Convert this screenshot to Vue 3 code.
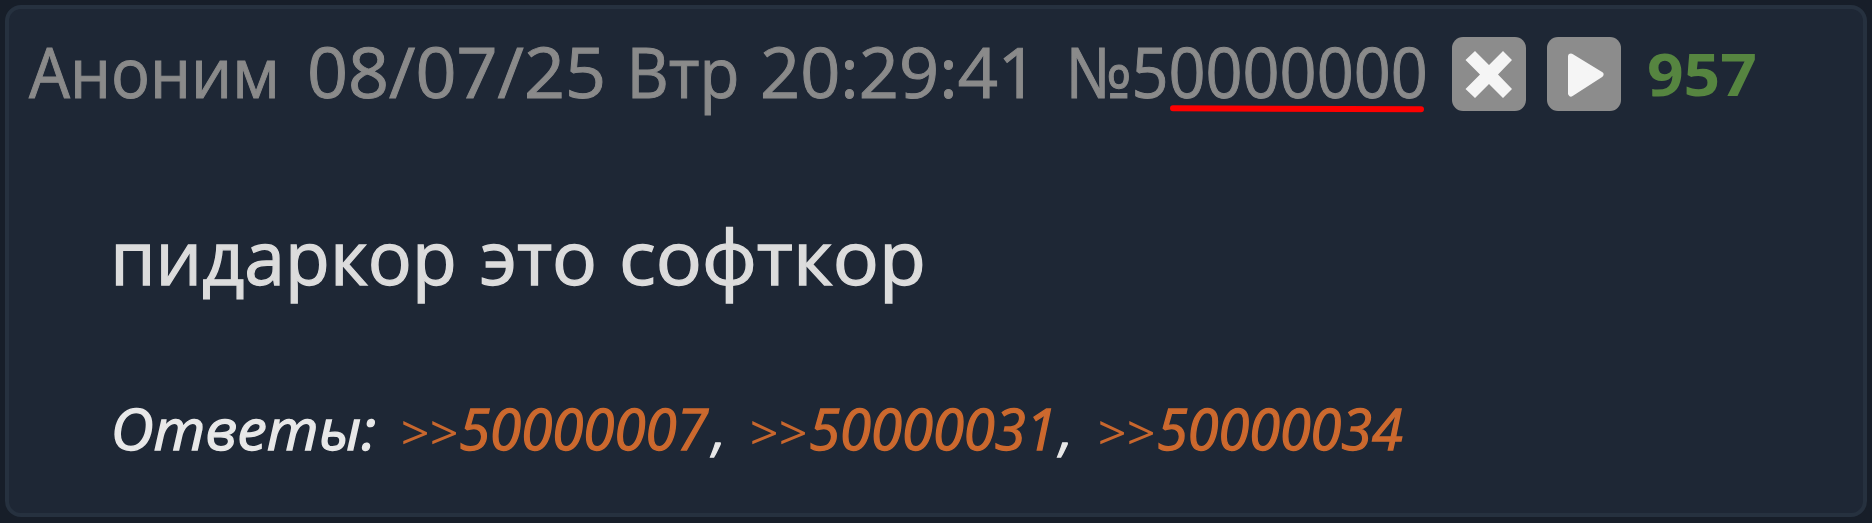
<script setup>
import { ref, onMounted } from 'vue'

// Each word carries its gap from the previous item and its drawn width.
const header = [
  { text: 'Аноним', gap: 0, width: 246 },
  { text: '08/07/25', gap: 35, width: 292 },
  { text: 'Втр', gap: 30, width: 104 },
  { text: '20:29:41', gap: 27, width: 260 },
  { text: '№50000000', gap: 48, width: 354 },
]
const score = [{ text: '957', gap: 27, width: 107 }]
const message = [
  { text: 'пидаркор', gap: 0, width: 337 },
  { text: 'это', gap: 29, width: 112 },
  { text: 'софткор', gap: 29, width: 299 },
]
const replies = [
  { text: 'Ответы:', gap: 0, width: 260, tone: 'label' },
  { text: '>>', gap: 28, width: 53, tone: 'arrows' },
  { text: '50000007', gap: 5, width: 248, tone: 'link' },
  { text: ',', gap: 1, width: 11, tone: 'label' },
  { text: '>>', gap: 31, width: 53, tone: 'arrows' },
  { text: '50000031', gap: 6, width: 240, tone: 'link' },
  { text: ',', gap: 6, width: 11, tone: 'label' },
  { text: '>>', gap: 32, width: 53, tone: 'arrows' },
  { text: '50000034', gap: 6, width: 243, tone: 'link' },
]

const ctx = document.createElement('canvas').getContext('2d')
const fit = (word, font) => {
  ctx.font = font
  const m = ctx.measureText(word.text)
  const ink = m.actualBoundingBoxLeft + m.actualBoundingBoxRight
  const s = word.width / ink
  return `translate(${m.actualBoundingBoxLeft * s} 0) scale(${s} 1)`
}

const ready = ref(0)
onMounted(() => document.fonts.ready.then(() => { ready.value++ }))
</script>

<template>
  <main class="page">
    <article class="post">
      <header class="row head">
        <svg v-for="w in header" :key="w.text + ready" class="word" :width="w.width" height="90" :style="{ marginLeft: w.gap + 'px' }">
          <g transform="translate(0 70)"><text :transform="fit(w, '70px &quot;Open Sans&quot;')">{{ w.text }}</text></g>
        </svg>
        <svg class="btn first" viewBox="0 0 74 74" width="74" height="74">
          <rect width="74" height="74" rx="11" fill="#8c8c8c" />
          <path d="M23 14 37 28 51 14 60 23 46 37.500 60 52 51 61 37 47 23 61 13.500 52 28 37.500 13.500 23Z" fill="#f5f5f5" />
        </svg>
        <svg class="btn" viewBox="0 0 74 74" width="74" height="74">
          <rect width="74" height="74" rx="11" fill="#8c8c8c" />
          <path d="M24 19.500 53.500 37.500 24 56.500Z" fill="#f5f5f5" stroke="#f5f5f5" stroke-width="6" stroke-linejoin="round" />
        </svg>
        <svg v-for="w in score" :key="w.text + ready" class="word score" :width="w.width" height="90" :style="{ marginLeft: w.gap + 'px' }">
          <g transform="translate(0 67.500)"><text :transform="fit(w, 'bold 59px &quot;Open Sans&quot;')">{{ w.text }}</text></g>
        </svg>
        <svg class="mark" width="254" height="8"><path d="M3 3.200 251 4.300" stroke="#fe0000" stroke-width="6" stroke-linecap="round" /></svg>
      </header>
      <p class="row message">
        <svg v-for="w in message" :key="w.text + ready" class="word" :width="w.width" height="110" :style="{ marginLeft: w.gap + 'px' }">
          <g transform="translate(0 79.500)"><text :transform="fit(w, '75px &quot;Open Sans&quot;')">{{ w.text }}</text></g>
        </svg>
      </p>
      <footer class="row replies">
        <svg v-for="(w, i) in replies" :key="i + '-' + ready" class="word" :class="w.tone" :width="w.width" height="80" :style="{ marginLeft: w.gap + 'px' }">
          <g transform="translate(0 59.500)"><text :transform="fit(w, w.tone === 'arrows' ? 'italic 48px &quot;Open Sans&quot;' : w.tone === 'label' ? 'italic 500 56px &quot;Open Sans&quot;' : 'italic 56px &quot;Open Sans&quot;')">{{ w.text }}</text></g>
        </svg>
      </footer>
    </article>
  </main>
</template>

<style>
html, body { margin: 0; background: #171e29; overflow: hidden; }
</style>

<style scoped>
.page { box-sizing: border-box; height: 523px; padding: 5px 5px 6px; background: #171e29; }
.post { box-sizing: border-box; height: 512px; border: 4px solid #26313f; border-radius: 16px; background: #1e2735; font-family: "Open Sans", "Noto Sans", sans-serif; }
.row { display: flex; align-items: flex-start; margin: 0; }
.word { display: block; flex: none; overflow: visible; stroke-width: 1px; }
.head { position: relative; height: 100px; padding: 19px 0 0 20px; font-size: 70px; }
.head .word { fill: #8a8a8a; stroke: #8a8a8a; }
.btn { display: block; flex: none; margin: 9px 0 0 21px; }
.btn.first { margin-left: 27px; }
.head .score { fill: #568540; stroke: none; font-size: 59px; font-weight: 700; }
.mark { position: absolute; left: 1161px; top: 96px; fill: none; }
.message { height: 110px; padding: 77px 0 0 107px; fill: #dcdcdc; stroke: #dcdcdc; font-size: 75px; }
.message .word { stroke-width: 1.3px; }
.replies { padding: 75px 0 0 106px; font-size: 56px; font-style: italic; }
.replies .word { stroke-width: 1.3px; }
.label { fill: #e8e8e8; stroke: #e8e8e8; font-weight: 500; }
.link { fill: #cc692e; stroke: #cc692e; }
.arrows { fill: #c8672e; stroke: none; font-size: 48px; }
</style>
